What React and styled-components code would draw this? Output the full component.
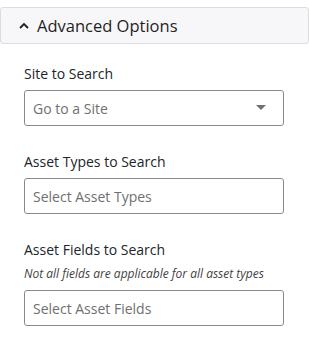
import React from "react";
import styled, { createGlobalStyle } from "styled-components";

const Global = createGlobalStyle`
  html, body { margin: 0; padding: 0; background: #fff; }
  body { font-family: "Open Sans", "Noto Sans", sans-serif; color: #212529; }
  * { box-sizing: border-box; }
`;

const Panel = styled.div`
  width: 309px;
  padding-top: 7px;
`;

const Header = styled.button`
  display: flex;
  align-items: center;
  gap: 8px;
  width: 100%;
  height: 37px;
  padding: 0 0 0 18px;
  margin: 0;
  background: #f7f7f9;
  border: 1px solid #dcdcdf;
  border-radius: 3px;
  font-family: inherit;
  font-size: 16.5px;
  color: #1f1f1f;
  cursor: pointer;
  text-align: left;
`;

const Body = styled.div`
  display: flex;
  flex-direction: column;
  gap: 26px;
  padding: 20px 25px 0 24px;
`;

const Field = styled.div`
  display: flex;
  flex-direction: column;
`;

const Label = styled.label`
  font-size: 14px;
  line-height: 20px;
  color: #212529;
  margin-bottom: 6px;
`;

const Note = styled.div`
  font-size: 12px;
  line-height: 18px;
  font-style: italic;
  color: #3f3f3f;
  margin: -1px 0 7px;
`;

const Box = styled.div`
  position: relative;
  display: flex;
  align-items: center;
  height: 36px;
  padding: 0 8px;
  border: 1px solid #8a8a8a;
  border-radius: 3px;
  background: #fff;
  font-size: 14px;
  color: #6f6f6f;
`;

const Caret = styled.span`
  position: absolute;
  right: 17px;
  top: 14px;
  width: 0;
  height: 0;
  border-left: 5px solid transparent;
  border-right: 5px solid transparent;
  border-top: 5px solid #707070;
`;

const Chevron = () => (
  <svg width="10" height="7" viewBox="0 0 10 7" aria-hidden="true">
    <path d="M1 6 L5 2 L9 6" fill="none" stroke="#1f1f1f" strokeWidth="1.8" />
  </svg>
);

export default function App() {
  return (
    <>
      <Global />
      <Panel>
        <Header type="button">
          <Chevron />
          Advanced Options
        </Header>
        <Body>
          <Field>
            <Label>Site to Search</Label>
            <Box>
              Go to a Site
              <Caret />
            </Box>
          </Field>
          <Field>
            <Label>Asset Types to Search</Label>
            <Box>Select Asset Types</Box>
          </Field>
          <Field>
            <Label>Asset Fields to Search</Label>
            <Note>Not all fields are applicable for all asset types</Note>
            <Box>Select Asset Fields</Box>
          </Field>
        </Body>
      </Panel>
    </>
  );
}
